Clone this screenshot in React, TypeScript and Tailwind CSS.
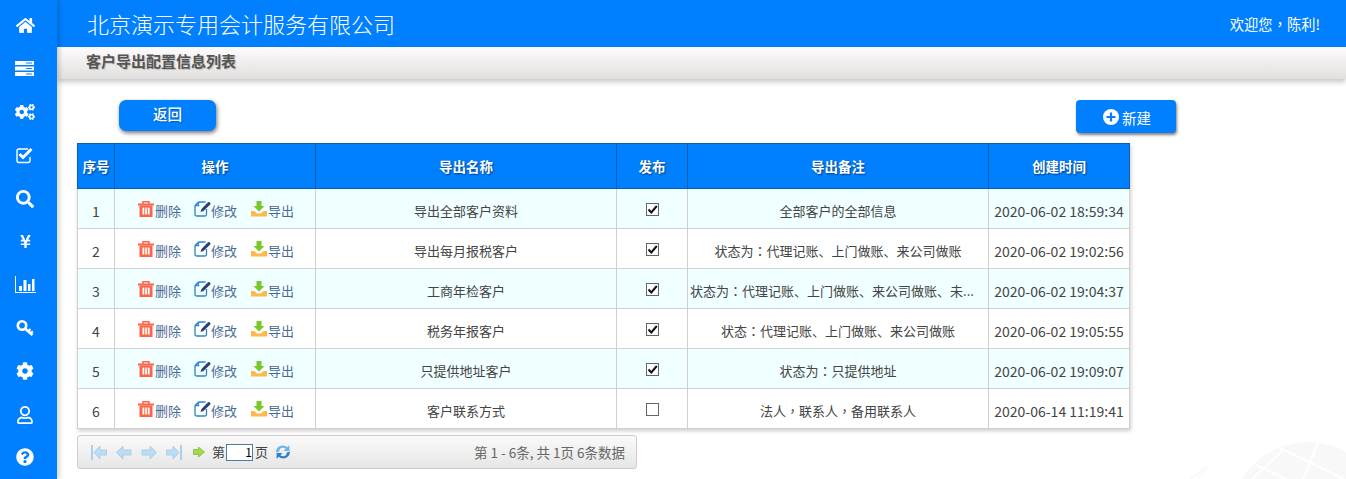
import { FaHome, FaCogs, FaSearch, FaYenSign, FaCog, FaQuestionCircle, FaRegUser } from 'react-icons/fa';

const rows = [
  { id: 1, name: '导出全部客户资料', pub: true, note: '全部客户的全部信息', time: '2020-06-02 18:59:34' },
  { id: 2, name: '导出每月报税客户', pub: true, note: '状态为：代理记账、上门做账、来公司做账', time: '2020-06-02 19:02:56' },
  { id: 3, name: '工商年检客户', pub: true, note: '状态为：代理记账、上门做账、来公司做账、未...', time: '2020-06-02 19:04:37' },
  { id: 4, name: '税务年报客户', pub: true, note: '状态：代理记账、上门做账、来公司做账', time: '2020-06-02 19:05:55' },
  { id: 5, name: '只提供地址客户', pub: true, note: '状态为：只提供地址', time: '2020-06-02 19:09:07' },
  { id: 6, name: '客户联系方式', pub: false, note: '法人，联系人，备用联系人', time: '2020-06-14 11:19:41' },
];

// the colon and comma sit centred in the cell, the TC cut has them that way
function CjkText({ text }: { text: string }) {
  return (
    <>
      {text.split(/([：，])/).map((part, i) =>
        part === '：' || part === '，' ? (
          <span key={i} className="font-['Noto_Sans_CJK_TC',sans-serif]">{part}</span>
        ) : (
          <span key={i}>{part}</span>
        ),
      )}
    </>
  );
}

function ServerIcon() {
  return (
    <svg width="20" height="15" viewBox="0 0 20 15" fill="white">
      <path d="M0 0h19v4H0z" />
      <path d="M0 5.500h19v4H0z" />
      <path d="M0 11h19v4H0z" />
      <path d="M11 1.500h6v1h-6zM11 7h6v1h-6zM11 12.500h6v1h-6z" fill="#0080ff" />
    </svg>
  );
}

function CheckIcon() {
  return (
    <svg width="18" height="17" viewBox="0 0 18 17">
      <path d="M12 2H3Q1 2 1 4v9.500q0 2 2 2h9q2 0 2-2V10" fill="none" stroke="white" strokeWidth="1.400" />
      <path d="M3.500 7l3.500 3.500L15.500 2" fill="none" stroke="white" strokeWidth="3" />
    </svg>
  );
}

function ChartIcon() {
  return (
    <svg width="21" height="17" viewBox="0 0 21 17" fill="white">
      <path d="M0 0h1v16h21v1H0z" />
      <path d="M4 10h3v5H4zM8.500 4h3v11h-3zM13 8h2.500v7H13zM17 3h2.500v12H17z" />
    </svg>
  );
}

function KeyIcon() {
  return (
    <svg width="18" height="18" viewBox="0 0 18 17">
      <circle cx="6" cy="6" r="4.200" fill="none" stroke="white" strokeWidth="2.600" />
      <path d="M9 9l7.500 6.500" fill="none" stroke="white" strokeWidth="2.800" />
      <path d="M12.500 11.500l2-2M15 13.500l1.800-1.800" fill="none" stroke="white" strokeWidth="2" />
    </svg>
  );
}

function TrashIcon() {
  return (
    <svg width="16" height="16" viewBox="0 0 16 16">
      <path d="M0 2.500h16v2H0z" fill="#ff6347" />
      <path d="M5 3V.8h6V3" fill="none" stroke="#ff6347" strokeWidth="1.500" />
      <path fillRule="evenodd" d="M1.500 4.500h13V16h-13zM4.500 6.500v7h1.800v-7zM7.200 6.500v7h1.700v-7zM9.800 6.500v7h1.800v-7z" fill="#ff6347" />
    </svg>
  );
}

function EditIcon() {
  return (
    <svg width="17" height="16" viewBox="0 0 17 16">
      <path d="M4.500 1h7M4.500 1L1 4.500V13.500q0 1.500 1.500 1.500h8.500q1.500 0 1.500-1.500V8M1 4.500h3.500V1" fill="none" stroke="#2a86c4" strokeWidth="1.300" />
      <path d="M6.500 11l1-3L14 1.200q1-.7 2 .2t.2 2L9.500 10z" fill="#2c3e73" />
    </svg>
  );
}

function ExportIcon() {
  return (
    <svg width="16" height="16" viewBox="0 0 16 16">
      <path d="M5.500 0h5v5h3L8 10.500 2.500 5h3z" fill="#7cc62c" />
      <path d="M0 10h3.500L6 12.500h4L12.500 10H16v5.500H0z" fill="#fdb94a" />
    </svg>
  );
}

function PageArrow({ dir, bar }: { dir: 'left' | 'right'; bar?: boolean }) {
  return (
    <svg width="16" height="15" viewBox="0 0 16 15" className={dir === 'left' ? '' : '-scale-x-100'}>
      <path d={bar ? 'M9 1L3 7.500l6 6.500V10h6.500V5H9z' : 'M7 1L.5 7.500 7 14v-4h8V5H7z'} fill="#bcdcf2" stroke="#a9d0ec" />
      {bar && <path d="M0 0h2v15H0z" fill="#a9d0ec" />}
    </svg>
  );
}

export default function App() {
  return (
    <div className="flex h-[479px] w-[1346px] overflow-hidden bg-white font-['Noto_Sans_CJK_SC','Liberation_Sans',sans-serif]">
      {/* left nav */}
      <div className="z-10 flex w-[57px] shrink-0 flex-col items-center bg-[#0080ff] pt-[17px] pr-[7px] text-[18px] text-white shadow-[3px_0_4px_rgba(0,0,0,0.15)]">
        <div className="flex h-[16px] items-center"><FaHome className="text-[19px]" /></div>
        <div className="mt-[27px] flex h-[16px] items-center"><ServerIcon /></div>
        <div className="mt-[27px] flex h-[18px] items-center"><FaCogs className="text-[20px]" /></div>
        <div className="mt-[25px] flex h-[18px] items-center"><CheckIcon /></div>
        <div className="mt-[26px] flex h-[18px] items-center"><FaSearch /></div>
        <div className="mt-[24px] flex h-[18px] items-center"><FaYenSign className="text-[15px]" /></div>
        <div className="mt-[25px] flex h-[18px] items-center"><ChartIcon /></div>
        <div className="mt-[26px] flex h-[18px] items-center"><KeyIcon /></div>
        <div className="mt-[25px] flex h-[18px] items-center"><FaCog /></div>
        <div className="mt-[26px] flex h-[18px] items-center"><FaRegUser /></div>
        <div className="mt-[24px] flex h-[18px] items-center"><FaQuestionCircle /></div>
      </div>

      <div className="relative flex min-w-0 flex-1 flex-col">
        {/* header */}
        <div className="flex h-[47px] shrink-0 items-center justify-between bg-[#0080ff] pr-[26px] pl-[30px] text-white">
          <span className="text-[22px] font-light">北京演示专用会计服务有限公司</span>
          <span className="text-[14.250px]"><CjkText text="欢迎您，陈利!" /></span>
        </div>

        {/* title bar */}
        <div className="flex h-[32px] shrink-0 items-center bg-gradient-to-b from-[#fdfbfb] to-[#e2e0df] pb-[4px] pl-[29px] text-[15px] font-bold text-[#555] shadow-[0_3px_5px_rgba(0,0,0,0.22)] [text-shadow:1px_1px_1px_rgba(0,0,0,0.2)]">
          客户导出配置信息列表
        </div>

        <div className="pt-[21px] pl-[20px]">
          {/* buttons */}
          <div className="flex w-[1099px] items-start justify-between pl-[42px]">
            <button className="h-[31px] w-[97px] rounded-[7px] bg-[#0080ff] pb-[3px] text-[14.500px] font-medium text-white shadow-[1px_2px_4px_rgba(0,0,0,0.55)] [text-shadow:1px_1px_1px_rgba(0,0,0,0.25)]">
              返回
            </button>
            <button className="flex h-[33px] w-[100px] items-center justify-center gap-[3px] rounded-[4px] bg-[#0080ff] pl-[2px] text-[14.500px] text-white shadow-[1px_2px_3px_rgba(0,0,0,0.5)]">
              <svg width="16" height="16" viewBox="0 0 16 16">
                <circle cx="8" cy="8" r="8" fill="white" />
                <path d="M3.500 8h9M8 3.500v9" stroke="#0080ff" strokeWidth="2.200" />
              </svg>
              <span className="mt-[2px]">新建</span>
            </button>
          </div>

          {/* table */}
          <table className="mt-[10px] w-[1053px] table-fixed border-collapse text-center text-[13px] text-[#444] shadow-[1px_2px_4px_rgba(0,0,0,0.2)]">
            <thead>
              <tr className="h-[45px] bg-[#0080ff] text-[13.500px] font-bold text-white [text-shadow:1px_1px_2px_rgba(0,0,0,0.5)]">
                <th className="w-[37px] border border-[#0b5fa8]">序号</th>
                <th className="w-[201px] border border-[#0b5fa8]">操作</th>
                <th className="w-[301px] border border-[#0b5fa8]">导出名称</th>
                <th className="w-[71px] border border-[#0b5fa8]">发布</th>
                <th className="w-[301px] border border-[#0b5fa8]">导出备注</th>
                <th className="border border-[#0b5fa8]">创建时间</th>
              </tr>
            </thead>
            <tbody>
              {rows.map((r) => (
                <tr key={r.id} className={r.id % 2 === 1 ? 'h-[40px] bg-[#f0ffff]' : 'h-[40px] bg-white'}>
                  <td className="border border-[#d0d0d0] pt-[5px] text-[14px]">{r.id}</td>
                  <td className="border border-[#d0d0d0] p-0">
                    <div className="flex items-center justify-center pl-[2px] text-[13px] text-[#4a6a96]">
                      <span className="flex items-center"><TrashIcon /><span className="mt-[4px] ml-px">删除</span></span>
                      <span className="ml-[13px] flex items-center"><EditIcon /><span className="mt-[4px]">修改</span></span>
                      <span className="ml-[14px] flex items-center"><ExportIcon /><span className="mt-[4px] ml-px">导出</span></span>
                    </div>
                  </td>
                  <td className="border border-[#d0d0d0] pt-[5px]">{r.name}</td>
                  <td className="border border-[#d0d0d0] pb-[1px]">
                    <span className="inline-flex h-[13px] w-[13px] items-center justify-center border border-[#666] bg-white align-middle">
                      {r.pub && (
                        <svg width="11" height="11" viewBox="0 0 11 11">
                          <path d="M1.500 5.500l2.800 3L9.800 2" fill="none" stroke="#111" strokeWidth="2" />
                        </svg>
                      )}
                    </span>
                  </td>
                  <td className={r.id === 3 ? 'overflow-hidden border border-[#d0d0d0] pt-[5px] pl-[2px] text-left whitespace-nowrap' : 'overflow-hidden border border-[#d0d0d0] pt-[5px] whitespace-nowrap'}>
                    <CjkText text={r.note} />
                  </td>
                  <td className="border border-[#d0d0d0] pt-[5px] text-[14px] whitespace-nowrap">{r.time}</td>
                </tr>
              ))}
            </tbody>
          </table>

          {/* pager */}
          <div className="mt-[6px] flex h-[34px] w-[560px] items-center rounded-[3px] border border-[#ccc] bg-gradient-to-b from-[#fafafa] to-[#e6e6e6] pr-[11px] pl-[13px] text-[13px] text-[#444]">
            <PageArrow dir="left" bar />
            <span className="ml-[9px]"><PageArrow dir="left" /></span>
            <span className="ml-[9px]"><PageArrow dir="right" /></span>
            <span className="ml-[9px]"><PageArrow dir="right" bar /></span>
            <svg width="12" height="12" viewBox="0 0 12 12" className="ml-[11px]">
              <path d="M5.500 1L11.500 6l-6 5V8.500H.5v-5h5z" fill="#a4d94a" stroke="#7fb52c" strokeWidth="0.700" />
            </svg>
            <span className="ml-[7px]">第</span>
            <span className="ml-[1px] flex h-[17px] w-[27px] items-center justify-end border border-[#4d7e9c] bg-white text-[12px] text-black">1</span>
            <span className="ml-[2px]">页</span>
            <svg width="16" height="16" viewBox="0 0 15 15" className="ml-[7px]">
              <path d="M1 8q0-6 6-6.500 3 0 4.500 1.500L13.500 1v5.500H8l2-2q-1-1-3-1-3 .2-3 3.500z" fill="#6bb5ec" />
              <path d="M14 7q0 6-6 6.500-3 0-4.500-1.500L1.500 14V8.500H7l-2 2q1 1 3 1 3-.2 3-3.500z" fill="#2a7fd0" />
            </svg>
            <span className="ml-auto text-[13.500px] text-[#666]">第 1 - 6条, 共 1页 6条数据</span>
          </div>
        </div>

        {/* watermark in the corner */}
        <svg width="156" height="42" viewBox="0 0 156 42" className="absolute right-0 bottom-0">
          <circle cx="118" cy="82" r="77" fill="#f8f8f8" />
          <path d="M62 42L92 14M88 10l66 32M66 28l30 14M128 6l-15 36" stroke="#fff" strokeWidth="2" fill="none" />
          <path d="M0 42L16 30M6 42l12-12" stroke="#f8f8f8" strokeWidth="1.500" fill="none" />
        </svg>
      </div>
    </div>
  );
}
